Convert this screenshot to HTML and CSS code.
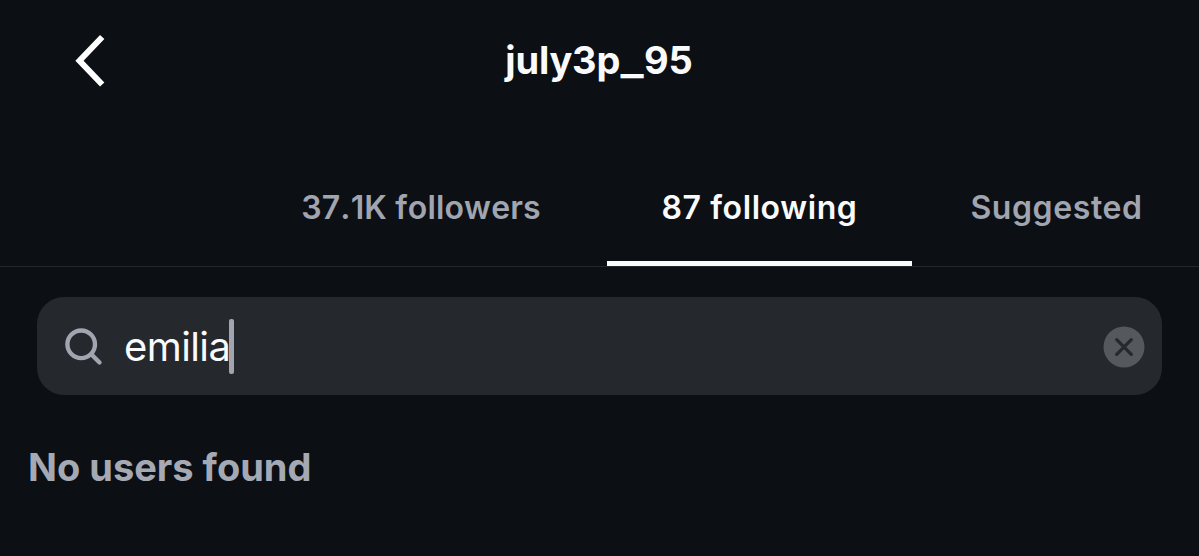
FILE: index.html
```html
<!DOCTYPE html>
<html lang="en">
<head>
    <meta charset="UTF-8">
    <meta name="viewport" content="width=device-width, initial-scale=1.0">
    <title>july3p_95</title>
    <link rel="stylesheet" href="styles.css">
</head>
<body>
    <header class="header">
        <svg class="back" width="32" height="54" viewBox="0 0 32 54">
            <path d="M28.2 3 L5.5 26.7 L28.2 50.5"/>
        </svg>
        <h1>july3p<span class="underscore">_</span>95</h1>
    </header>

    <nav class="tabs">
        <div class="tab followers"><span>37.1K followers</span></div>
        <div class="tab active"><span>87 following</span></div>
        <div class="tab suggested"><span>Suggested</span></div>
    </nav>

    <main>
        <div class="search">
            <svg class="search-icon" width="40" height="40" viewBox="0 0 40 40">
                <circle cx="17.2" cy="17.3" r="13.8"/>
                <path d="M27.5 27.5 L35.5 35.5"/>
            </svg>
            <span class="query">emilia</span>
            <span class="cursor"></span>
            <svg class="clear" width="42" height="42" viewBox="0 0 42 42">
                <circle cx="21" cy="21" r="20.5"/>
                <path d="M13.7 13.7 L28.3 28.3 M28.3 13.7 L13.7 28.3"/>
            </svg>
        </div>
        <p class="empty">No users found</p>
    </main>
</body>
</html>
```

FILE: styles.css
```css
* {
    box-sizing: border-box;
}
body {
    margin: 0;
    height: 556px;
    overflow: hidden;
    background-color: #0c0f14;
    color: #f9fafb;
    font-family: Inter, "Liberation Sans", sans-serif;
}
.header {
    display: grid;
    grid-template-columns: 150px 1fr 150px;
    align-items: center;
    height: 122px;
}
.back {
    margin-left: 74px;
    fill: none;
    stroke: #fff;
    stroke-width: 6;
}
h1 {
    margin: 0;
    padding: 0 1px 2px 0;
    text-align: center;
    font-size: 38px;
    font-weight: 700;
    line-height: 48px;
    letter-spacing: -0.2px;
}
.underscore {
    display: inline-block;
    margin: 0 3px;
    transform: scaleX(1.28);
}
.tabs {
    display: grid;
    grid-template-columns: 235px 372px 305px 287px;
    height: 145px;
    border-bottom: 1px solid #23272c;
}
.tab {
    display: flex;
    justify-content: center;
    padding-top: 66px;
    color: #a0a5b0;
    font-size: 32px;
    font-weight: 600;
    line-height: 40px;
    letter-spacing: 0.6px;
    white-space: nowrap;
}
.followers {
    grid-column: 2;
    font-kerning: none;
    letter-spacing: 0.15px;
}
.active {
    color: #f9fafb;
    border-bottom: 5px solid #f9fafb;
}
.suggested {
    padding-left: 2px;
}
.search {
    display: flex;
    align-items: center;
    height: 98px;
    margin: 30px 37px 0;
    padding: 0 17px 0 27px;
    border-radius: 27px;
    background-color: #25282d;
}
.search-icon {
    margin-top: 1px;
    fill: none;
    stroke: #a0a5b0;
    stroke-width: 4.4;
    stroke-linecap: round;
}
.query {
    margin-left: 20px;
    padding-top: 2px;
    font-size: 40px;
    line-height: 48px;
    letter-spacing: -0.6px;
}
/* the caret touches the last letter */
.cursor {
    width: 5px;
    height: 55px;
    margin-left: -1px;
    border-radius: 2px;
    background-color: #a0a5b0;
}
.clear {
    margin: 2px 0 0 auto;
    fill: #55585d;
}
.clear path {
    stroke: #25282d;
    stroke-width: 3.2;
    stroke-linecap: round;
}
.empty {
    margin: 48px 0 0 28px;
    color: #a4a9b4;
    font-size: 38px;
    font-weight: 700;
    line-height: 48px;
}
```
